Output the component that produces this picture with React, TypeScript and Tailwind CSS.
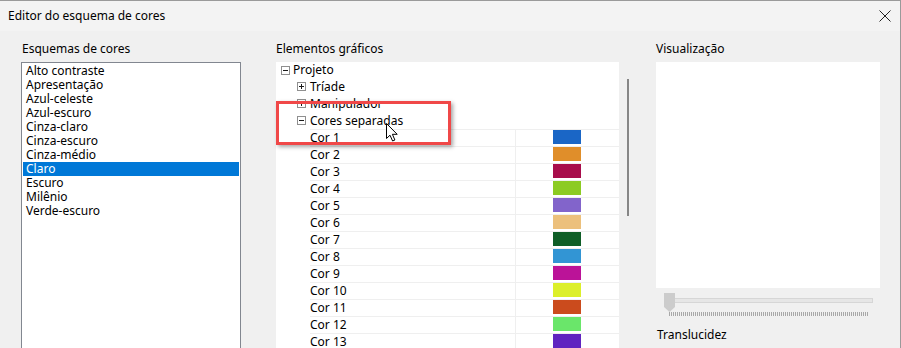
import React from "react";

const schemes = [
  "Alto contraste",
  "Apresentação",
  "Azul-celeste",
  "Azul-escuro",
  "Cinza-claro",
  "Cinza-escuro",
  "Cinza-médio",
  "Claro",
  "Escuro",
  "Milênio",
  "Verde-escuro",
];

const colors = [
  "#1a66c6",
  "#e08e2a",
  "#a80d4b",
  "#8ccb23",
  "#8264cb",
  "#ecc07c",
  "#0f5e27",
  "#3295d4",
  "#bb1398",
  "#dcef2a",
  "#cb4b1d",
  "#6ae66a",
  "#6024c0",
];

function Toggle({ open }: { open: boolean }) {
  return (
    <svg width="9" height="9" viewBox="0 0 9 9" className="shrink-0">
      <rect x="0.5" y="0.5" width="8" height="8" fill="white" stroke="#8f8f8f" />
      <path d="M2 4.5h5" stroke="#1a1a1a" />
      {!open && <path d="M4.5 2v5" stroke="#1a1a1a" />}
    </svg>
  );
}

function App() {
  return (
    <div className="w-[901px] h-[348px] overflow-hidden bg-[#f0f0f0] border-t border-r border-[#9a9a9a] font-['Noto_Sans',sans-serif] text-[12px] text-black">
      <div className="h-[30px] bg-[#f3f3f3] flex items-center justify-between pl-2 pr-[9px]">
        <span className="leading-[14px]">Editor do esquema de cores</span>
        <svg width="12" height="12" viewBox="0 0 12 12">
          <path d="M0.5 0.5l11 11M11.5 0.5l-11 11" stroke="#222" strokeWidth="1" />
        </svg>
      </div>

      <div className="flex pl-[21px] pt-[11px]">
        <div className="w-[220px]">
          <p className="leading-[14px] pl-px mb-[6px]">Esquemas de cores</p>
          <div className="h-[300px] bg-white border border-[#828790] pt-px px-px">
            {schemes.map((s) => (
              <div
                key={s}
                className={
                  s === "Claro"
                    ? "h-[14px] leading-[14px] pl-[3px] bg-[#0078d7] text-white"
                    : "h-[14px] leading-[14px] pl-[3px]"
                }
              >
                {s}
              </div>
            ))}
          </div>
        </div>

        <div className="ml-[35px] w-[360px]">
          <p className="leading-[14px] mb-[6px]">Elementos gráficos</p>
          <div className="flex h-[300px]">
            <div className="relative w-[343px] bg-white">
              <div className="h-[16px] flex items-center pl-[5px] gap-[3px] leading-[14px]">
                <Toggle open />
                <span>Projeto</span>
              </div>
              <div className="h-[17px] flex items-center pl-[21px] gap-[4px] leading-[14px]">
                <Toggle open={false} />
                <span>Tríade</span>
              </div>
              <div className="h-[17px] flex items-center pl-[21px] gap-[4px] leading-[14px]">
                <Toggle open={false} />
                <span>Manipulador</span>
              </div>
              <div className="h-[17px] flex items-center pl-[21px] gap-[4px] leading-[14px]">
                <Toggle open />
                <span>Cores separadas</span>
              </div>
              {colors.map((c, i) => (
                <div key={c} className="ml-[34px] h-[17px] flex border-t border-[#efefef]">
                  <div className="w-[205px] leading-[14px] pt-px">Cor {i + 1}</div>
                  <div className="flex-1 border-l border-[#efefef] pl-[37px]">
                    <div className="w-[28px] h-[14px]" style={{ backgroundColor: c }} />
                  </div>
                </div>
              ))}

              <div className="absolute left-0 top-[39px] w-[175px] h-[44px] border-[3px] border-[#f04848] shadow-[2px_2px_4px_rgba(0,0,0,0.35)]" />
              <svg
                className="absolute left-[110px] top-[61px]"
                width="13"
                height="19"
                viewBox="0 0 13 19"
              >
                <path
                  d="M0.5 0.5V15.5L4 12.2L6.6 18L8.9 17L6.4 11.3H11.2Z"
                  fill="white"
                  stroke="black"
                  strokeLinejoin="round"
                />
              </svg>
            </div>
            <div className="w-[17px] pl-[8px] pt-[17px]">
              <div className="w-[2px] h-[137px] bg-[#868686]" />
            </div>
          </div>
        </div>

        <div className="ml-[20px] w-[224px]">
          <p className="leading-[14px] mb-[6px]">Visualização</p>
          <div className="h-[226px] bg-white" />
          <div className="relative h-[30px] mt-[5px]">
            <div className="absolute left-[10px] top-[5px] w-[207px] h-[5px] bg-[#e6e6e6] border border-[#d6d6d6]" />
            <svg className="absolute left-[8px] top-0" width="12" height="19" viewBox="0 0 12 19">
              <polygon points="0,0 11,0 11,14 5.5,19 0,14" fill="#cccccc" />
            </svg>
            <div className="absolute left-[13px] top-[19px] w-[199px] h-[4px] bg-[repeating-linear-gradient(90deg,#a8a8a8_0_1px,transparent_1px_2px)]" />
          </div>
          <p className="leading-[14px] mt-[5px] pl-px">Translucidez</p>
        </div>
      </div>
    </div>
  );
}

export default App;
